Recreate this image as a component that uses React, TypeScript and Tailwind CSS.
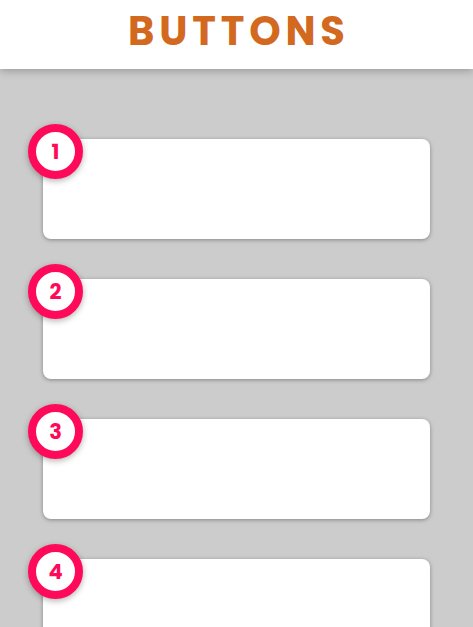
export default function App() {
  const items = [1, 2, 3, 4]

  return (
    <div className="min-h-screen bg-[#cccccc]" style={{ fontFamily: "Poppins, Inter, 'Noto Sans', sans-serif" }}>
      {/* Header */}
      <header className="h-[69px] bg-white flex items-center justify-center pb-[8px] shadow-[0_2px_8px_rgba(0,0,0,0.25)] relative z-10">
        <h1 className="text-[40px] font-bold tracking-[0.12em] text-[#d2691e] leading-none pl-[0.12em]">
          BUTTONS
        </h1>
      </header>

      {/* Cards */}
      <div className="flex flex-col gap-10 px-[43px] pt-[70px] pb-10">
        {items.map((n) => (
          <div
            key={n}
            className="relative h-[100px] bg-white rounded-lg shadow-[0_1px_4px_rgba(0,0,0,0.35)]"
          >
            <div className="absolute -left-[15px] -top-[15px] w-[55px] h-[55px] rounded-full bg-white border-[8px] border-[#ff0a5a] flex items-center justify-center shadow-[0_2px_6px_rgba(0,0,0,0.3)]">
              <span className="text-[#ff0a5a] text-[21px] font-bold leading-none">{n}</span>
            </div>
          </div>
        ))}
      </div>
    </div>
  )
}
